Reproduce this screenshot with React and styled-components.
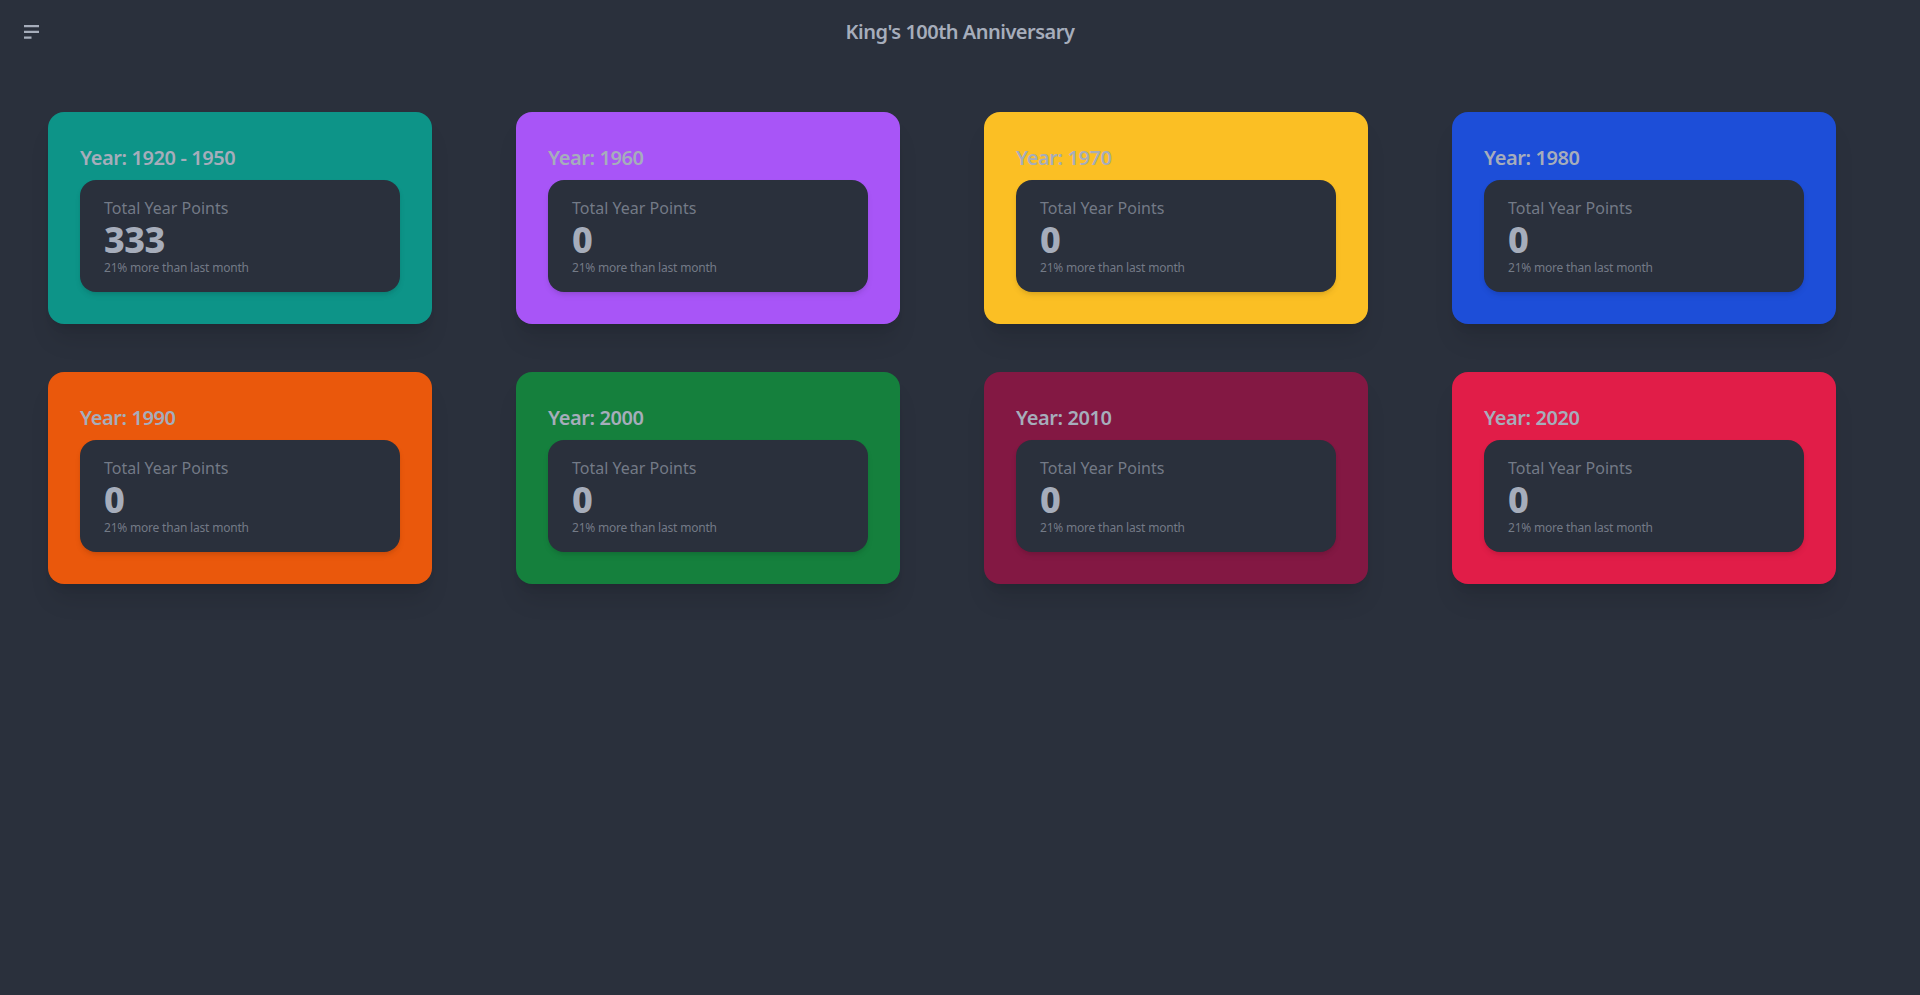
import React from 'react'
import styled, { createGlobalStyle } from 'styled-components'

const GlobalStyle = createGlobalStyle`
    html, body {
        margin: 0;
        padding: 0;
        background: #2a303c;
        color: #a6adbb;
        font-family: "Noto Sans", "Open Sans", sans-serif;
        min-height: 100%;
    }
`

const Page = styled.div`
    min-height: 995px;
    background: #2a303c;
`

const NavBar = styled.div`
    height: 64px;
    padding: 8px;
    box-sizing: border-box;
    display: grid;
    grid-template-columns: 48px 1fr 48px;
    align-items: center;
    h1 {
        margin: 0;
        text-align: center;
        font-size: 20px;
        line-height: 28px;
        font-weight: 600;
        letter-spacing: -0.5px;
        color: #a6adbb;
    }
`

const MenuButton = styled.button`
    width: 48px;
    height: 48px;
    border: none;
    background: transparent;
    padding: 0 0 0 16px;
    display: flex;
    align-items: center;
    cursor: pointer;
`

const Grid = styled.div`
    display: grid;
    grid-template-columns: repeat(4, 1fr);
    padding: 24px;
`

const Card = styled.div`
    margin: 24px;
    width: 384px;
    height: 212px;
    box-sizing: border-box;
    padding: 32px;
    border-radius: 16px;
    background: ${props => props.color};
    display: flex;
    flex-direction: column;
    gap: 8px;
    box-shadow: 0 20px 25px -5px rgba(0, 0, 0, 0.1), 0 8px 10px -6px rgba(0, 0, 0, 0.1);
    h2 {
        margin: 0;
        font-size: 20px;
        line-height: 28px;
        font-weight: 600;
        letter-spacing: -0.4px;
        color: #a6adbb;
    }
`

const Stat = styled.div`
    background: #2a303c;
    border-radius: 16px;
    padding: 16px 24px;
    box-shadow: 0 4px 6px -1px rgba(0, 0, 0, 0.1), 0 2px 4px -2px rgba(0, 0, 0, 0.1);
    display: flex;
    flex-direction: column;
`

const StatTitle = styled.div`
    font-size: 16px;
    line-height: 24px;
    color: rgba(166, 173, 187, 0.6);
`

const StatValue = styled.div`
    font-size: 36px;
    line-height: 40px;
    font-weight: 800;
    letter-spacing: -0.5px;
    color: #a6adbb;
`

const StatDesc = styled.div`
    font-size: 12px;
    line-height: 16px;
    letter-spacing: -0.2px;
    color: rgba(166, 173, 187, 0.6);
`

const years = [
    { label: '1920 - 1950', color: '#0d9488', points: 333 },
    { label: '1960', color: '#a855f7', points: 0 },
    { label: '1970', color: '#fbbf24', points: 0 },
    { label: '1980', color: '#1d4ed8', points: 0 },
    { label: '1990', color: '#ea580c', points: 0 },
    { label: '2000', color: '#15803d', points: 0 },
    { label: '2010', color: '#831843', points: 0 },
    { label: '2020', color: '#e11d48', points: 0 },
]

// three bars, the last one short
const MenuIcon = () => (
    <svg width="15" height="14" viewBox="0 0 15 14" fill="none">
        <path d="M0 1.2h15M0 6.9h15M0 12.6h7.5" stroke="#a6adbb" strokeWidth="2.2" />
    </svg>
)

const App = () => {
    return (
        <Page>
            <GlobalStyle />
            <NavBar>
                <MenuButton>
                    <MenuIcon />
                </MenuButton>
                <h1>King's 100th Anniversary</h1>
                <div />
            </NavBar>
            <Grid>
                {years.map(y => (
                    <Card key={y.label} color={y.color}>
                        <h2>Year: {y.label}</h2>
                        <Stat>
                            <StatTitle>Total Year Points</StatTitle>
                            <StatValue>{y.points}</StatValue>
                            <StatDesc>21% more than last month</StatDesc>
                        </Stat>
                    </Card>
                ))}
            </Grid>
        </Page>
    )
}

export default App
